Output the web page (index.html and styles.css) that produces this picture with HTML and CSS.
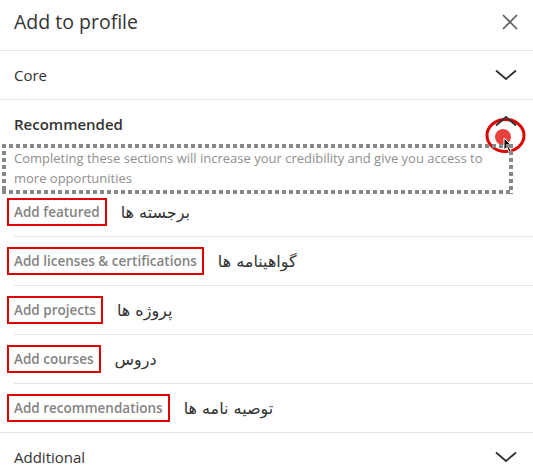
FILE: index.html
```html
<!DOCTYPE html>
<html lang="en">
<head>
    <meta charset="UTF-8">
    <meta name="viewport" content="width=device-width, initial-scale=1.0">
    <title>Add to profile</title>
    <link rel="stylesheet" href="styles.css">
</head>
<body>
    <div class="modal">
        <div class="modal-header">
            <h2 class="modal-title">Add to profile</h2>
            <button class="close-btn" aria-label="Close">
                <svg width="16" height="16" viewBox="0 0 16 16">
                    <path d="M1 1 L15 15 M15 1 L1 15" stroke="#5e5e5e" stroke-width="1.7" fill="none"/>
                </svg>
            </button>
        </div>

        <div class="section">
            <div class="section-head">
                <span class="section-name">Core</span>
                <svg class="chevron" width="22" height="12" viewBox="0 0 22 12">
                    <polyline points="1,1.5 11,10 21,1.5" stroke="#333" stroke-width="1.8" fill="none"/>
                </svg>
            </div>
        </div>

        <div class="section open">
            <div class="section-head">
                <span class="section-name strong">Recommended</span>
                <!-- click marker drawn over the toggle -->
                <svg class="click-mark" width="46" height="40" viewBox="0 0 46 40">
                    <ellipse cx="20.5" cy="20.5" rx="18.5" ry="16" stroke="#e00000" stroke-width="3" fill="none"/>
                    <circle cx="18" cy="22" r="8" fill="#e8423f"/>
                    <path d="M19 23 L19 35 L21.8 32.4 L24 37 L26 36 L23.8 31.6 L27.5 31.4 Z" fill="#000" stroke="#fff" stroke-width="1"/>
                </svg>
                <svg class="chevron up" width="22" height="12" viewBox="0 0 22 12">
                    <polyline points="1,10.5 11,2 21,10.5" stroke="#333" stroke-width="1.8" fill="none"/>
                </svg>
            </div>
            <p class="desc">Completing these sections will increase your credibility and give you access to more opportunities</p>
            <ul class="items">
                <li><span class="mark">Add featured</span><span class="fa" dir="rtl">برجسته ها</span></li>
                <li><span class="mark">Add licenses &amp; certifications</span><span class="fa" dir="rtl">گواهینامه ها</span></li>
                <li><span class="mark">Add projects</span><span class="fa" dir="rtl">پروژه ها</span></li>
                <li><span class="mark">Add courses</span><span class="fa" dir="rtl">دروس</span></li>
                <li><span class="mark">Add recommendations</span><span class="fa" dir="rtl">توصیه نامه ها</span></li>
            </ul>
        </div>

        <div class="section">
            <div class="section-head">
                <span class="section-name">Additional</span>
                <svg class="chevron" width="22" height="12" viewBox="0 0 22 12">
                    <polyline points="1,1.5 11,10 21,1.5" stroke="#333" stroke-width="1.8" fill="none"/>
                </svg>
            </div>
        </div>
    </div>
</body>
</html>
```

FILE: styles.css
```css
body {
    margin: 0;
    background: #fff;
    font-family: 'Open Sans', 'DejaVu Sans', sans-serif;
    color: #333;
}

.modal {
    width: 533px;
    height: 468px;
    overflow: hidden;
}

.modal-header {
    display: flex;
    justify-content: space-between;
    align-items: flex-start;
    height: 51px;
    padding: 9px 15px 0 14px;
    border-bottom: 1px solid #e6e6e6;
    box-sizing: border-box;
}

.modal-title {
    margin: 0;
    font-size: 19.5px;
    line-height: 26px;
    font-weight: 400;
    color: #333;
}

.close-btn {
    background: none;
    border: none;
    padding: 0;
    margin-top: 5px;
    width: 16px;
    height: 16px;
    cursor: pointer;
}

.close-btn svg {
    display: block;
}

.section {
    border-bottom: 1px solid #e6e6e6;
}

.section-head {
    position: relative;
    display: flex;
    justify-content: space-between;
    align-items: center;
    height: 48px;
    padding: 0 16px 0 14px;
    box-sizing: border-box;
}

.section-name {
    font-size: 15px;
    line-height: 20px;
}

.section-name.strong {
    font-weight: 600;
}

.open .section-head {
    height: 34px;
    align-items: flex-end;
}

.chevron {
    display: block;
}

.chevron.up {
    position: relative;
    z-index: 1;
    margin-bottom: 7px;
}

.click-mark {
    position: absolute;
    right: 2px;
    top: 15px;
}

.desc {
    position: relative;
    margin: 14px 16px 0 14px;
    font-size: 13px;
    line-height: 20px;
    color: #8f8f8f;
    padding-right: 20px;
}

/* dotted frame around the description */
.desc::before {
    content: '';
    position: absolute;
    top: -4px;
    left: -12px;
    right: 4px;
    bottom: -6px;
    background:
        repeating-linear-gradient(90deg, #888 0 4px, transparent 4px 7px) top / 100% 4px no-repeat,
        repeating-linear-gradient(90deg, #888 0 4px, transparent 4px 7px) bottom / 100% 4px no-repeat,
        repeating-linear-gradient(180deg, #888 0 4px, transparent 4px 7px) left / 4px 100% no-repeat,
        repeating-linear-gradient(180deg, #888 0 4px, transparent 4px 7px) right / 4px 100% no-repeat;
}

.items {
    list-style: none;
    margin: 0;
    padding: 0;
}

.items li {
    display: flex;
    align-items: center;
    height: 48px;
    margin-left: 14px;
    border-bottom: 1px solid #e6e6e6;
}

.items li:last-child {
    border-bottom: none;
}

.mark {
    margin-left: -7px;
    padding: 3px 5px;
    border: 2px solid #e00000;
    font-size: 13.5px;
    line-height: 18px;
    font-weight: 600;
    color: #838383;
}

.fa {
    margin-left: 14px;
    font-family: 'DejaVu Sans', sans-serif;
    font-size: 16px;
    color: #333;
}
```
